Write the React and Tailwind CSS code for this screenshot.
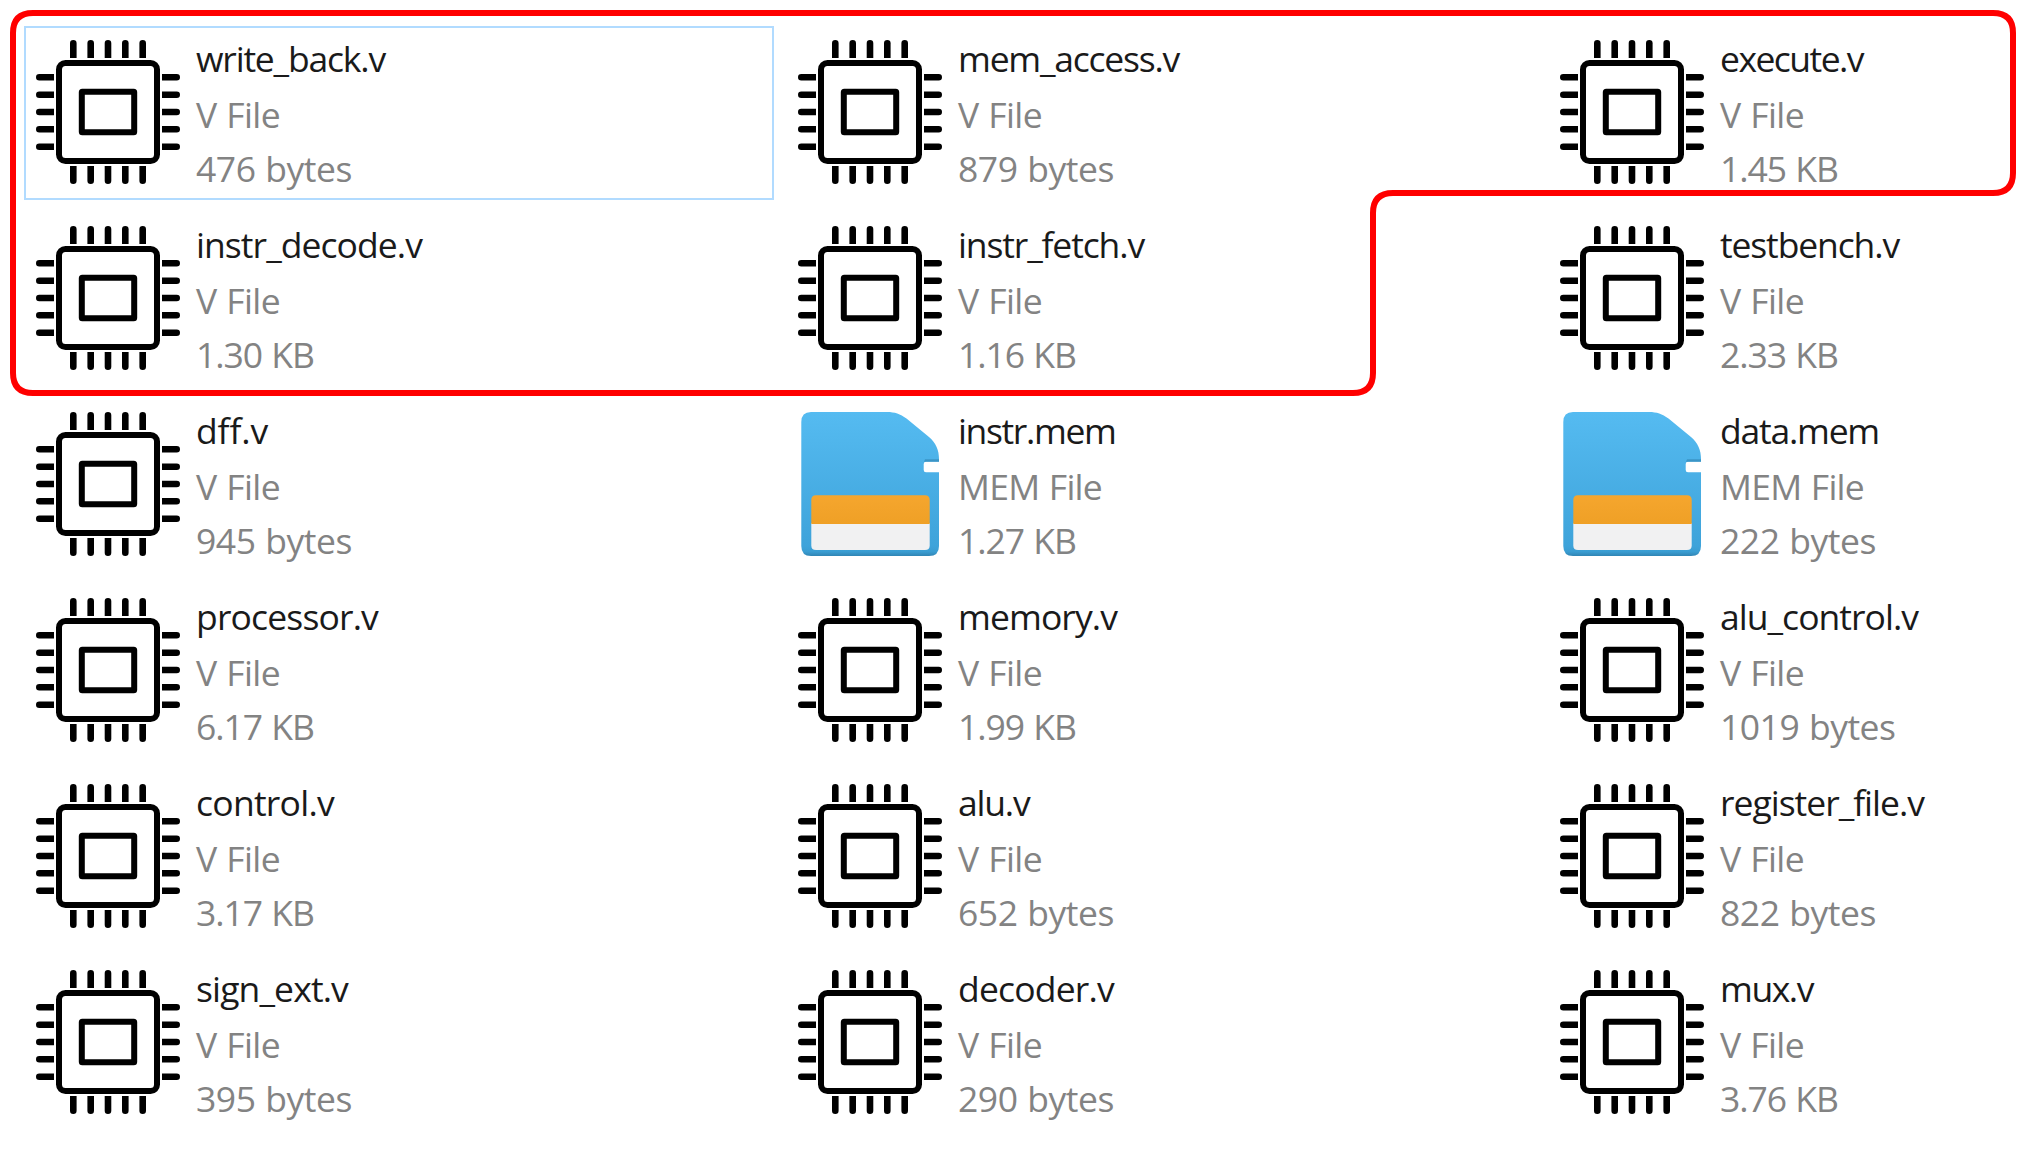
import { useLayoutEffect, useRef } from "react";

// name, type, size, and the rendered width of the name in pixels
const files = [
  ["write_back.v", "V File", "476 bytes", 189],
  ["mem_access.v", "V File", "879 bytes", 221],
  ["execute.v", "V File", "1.45 KB", 143],
  ["instr_decode.v", "V File", "1.30 KB", 226],
  ["instr_fetch.v", "V File", "1.16 KB", 186],
  ["testbench.v", "V File", "2.33 KB", 179],
  ["dff.v", "V File", "945 bytes", 72],
  ["instr.mem", "MEM File", "1.27 KB", 157.5],
  ["data.mem", "MEM File", "222 bytes", 159],
  ["processor.v", "V File", "6.17 KB", 182],
  ["memory.v", "V File", "1.99 KB", 159],
  ["alu_control.v", "V File", "1019 bytes", 198],
  ["control.v", "V File", "3.17 KB", 138],
  ["alu.v", "V File", "652 bytes", 71.5],
  ["register_file.v", "V File", "822 bytes", 204],
  ["sign_ext.v", "V File", "395 bytes", 152],
  ["decoder.v", "V File", "290 bytes", 156],
  ["mux.v", "V File", "3.76 KB", 93],
];

const pins = [37.3, 54.7, 72, 89.3, 106.7];

function ChipIcon() {
  return (
    <svg viewBox="0 0 144 144" className="size-36 shrink-0" fill="none" stroke="#000" strokeWidth="6">
      <rect x="23" y="23" width="98" height="98" rx="6.5" />
      <rect x="45.8" y="51.8" width="52.4" height="40.4" rx="0.5" strokeLinejoin="round" />
      {[0, 90, 180, 270].map((angle) => (
        <g key={angle} transform={`rotate(${angle} 72 72)`} fill="#000" stroke="none">
          {pins.map((x) => (
            <path key={x} d={`M${x - 3.3} 18V3.3a3.3 3.3 0 0 1 6.6 0V18z`} />
          ))}
        </g>
      ))}
    </svg>
  );
}

function CardIcon() {
  return (
    <svg viewBox="0 0 144 144" className="size-36 shrink-0">
      <defs>
        <linearGradient id="card" x1="0" y1="0" x2="0" y2="1">
          <stop offset="0" stopColor="#55bbf1" />
          <stop offset="0.93" stopColor="#3ea3da" />
          <stop offset="0.97" stopColor="#3a9dd2" />
          <stop offset="1" stopColor="#3085b4" />
        </linearGradient>
        <linearGradient id="band" x1="0" y1="0" x2="0" y2="1">
          <stop offset="0" stopColor="#f5a62e" />
          <stop offset="1" stopColor="#efa026" />
        </linearGradient>
      </defs>
      <path
        d="M13 0H89C97 0 102 2 108.5 6.5L131 25C138 31 141 38 141 47V49.7H128Q125.7 49.7 125.7 52V58Q125.7 60.3 128 60.3H141V134Q141 144 131 144H13Q3.3 144 3.3 134V10Q3.3 0 13 0Z"
        fill="url(#card)"
      />
      <path d="M127 47.2H141V49.7H126Z" fill="#3389b8" opacity="0.7" />
      <path d="M13.3 111H131.7V133.5Q131.7 138 127 138H18Q13.3 138 13.3 133.5Z" fill="#f1f1f2" />
      <path d="M13.3 112V88Q13.3 83.3 18 83.3H127Q131.7 83.3 131.7 88V112Z" fill="url(#band)" />
    </svg>
  );
}

// A single line whose tracking is adjusted so that it fills the given width
function Line({ text, width, className }) {
  const ref = useRef(null);
  useLayoutEffect(() => {
    const el = ref.current;
    el.style.letterSpacing = "0px";
    const natural = el.getBoundingClientRect().width;
    el.style.letterSpacing = `${(width - natural) / text.length}px`;
  }, [text, width]);
  return (
    <div className={className}>
      <span ref={ref}>{text}</span>
    </div>
  );
}

const typeWidths = { "V File": 84, "MEM File": 144 };

function sizeWidth(size) {
  if (size.length === 10) return 175.5;
  return size.endsWith("KB") ? 118 : 156;
}

function FileTile({ file, selected }) {
  const [name, type, size, width] = file;
  return (
    <div
      className={`flex h-[174px] items-start gap-4 border-2 pt-3 pl-2.5 ${
        selected ? "border-[#b1dbff]" : "border-transparent"
      }`}
    >
      {type === "MEM File" ? <CardIcon /> : <ChipIcon />}
      <div className="-mt-0.5 flex flex-col whitespace-nowrap text-[#838383] [word-spacing:1px]">
        <Line text={name} width={width} className="h-[56px] text-[35.5px] leading-[40px] text-[#1a1a1a]" />
        <Line text={type} width={typeWidths[type]} className="h-[54px] text-[35.5px] leading-[40px]" />
        <Line text={size} width={sizeWidth(size)} className="h-[40px] text-[35.5px] leading-[40px]" />
      </div>
    </div>
  );
}

export default function App() {
  return (
    <main className="relative h-[1176px] w-[2030px] overflow-hidden bg-white pt-[26px] pl-6 font-['Open_Sans','Noto_Sans',sans-serif]">
      <div className="grid w-[2274px] grid-cols-[repeat(3,750px)] gap-3">
        {files.map((file, i) => (
          <FileTile key={file[0]} file={file} selected={i === 0} />
        ))}
      </div>
      <svg
        viewBox="0 0 2030 420"
        className="pointer-events-none absolute top-0 left-0 h-[420px] w-[2030px]"
        fill="none"
        stroke="#ff0000"
        strokeWidth="6"
      >
        <path d="M33 13H1993Q2013 13 2013 33V173Q2013 193 1993 193H1393Q1373 193 1373 213V373Q1373 393 1353 393H33Q13 393 13 373V33Q13 13 33 13Z" />
      </svg>
    </main>
  );
}
